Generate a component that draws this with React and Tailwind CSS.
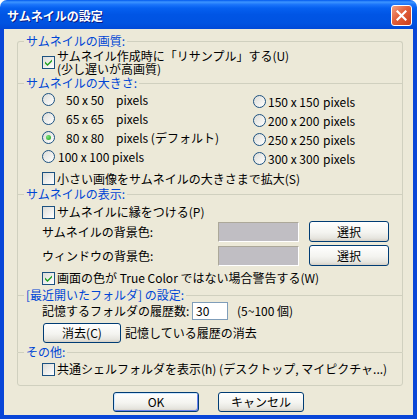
import React from "react";

function Check({ checked }) {
  return (
    <span className="flex h-[13px] w-[13px] shrink-0 items-center justify-center border border-[#1C5180] bg-[linear-gradient(135deg,#DCDCD7,#FFFFFF)]">
      {checked && (
        <svg width="7" height="7" viewBox="0 0 7 7">
          <path d="M0 2.5L2.5 5L7 0.5V2.5L2.5 7L0 4.5Z" fill="#21A121" />
        </svg>
      )}
    </span>
  );
}

function Radio({ checked }) {
  return (
    <span className="flex h-[13px] w-[13px] shrink-0 items-center justify-center rounded-full border border-[#1C5180] bg-[linear-gradient(135deg,#DCDCD7,#FFFFFF)]">
      {checked && (
        <span className="h-[5px] w-[5px] rounded-full bg-[radial-gradient(circle_at_35%_35%,#7BE37B,#1E9E1E)]" />
      )}
    </span>
  );
}

function Btn({ children, className }) {
  return (
    <button
      className={`flex shrink-0 items-center justify-center rounded-[3px] border border-[#003C74] bg-[linear-gradient(to_bottom,#FFFFFF_0%,#F4F4F0_55%,#E6E5DF_85%,#D6D0C5_100%)] text-[12px] leading-[14px] text-black ${className}`}
    >
      {children}
    </button>
  );
}

function Legend({ children }) {
  return (
    <legend className="ml-[6px] px-[2px] text-[12px] leading-[14px] text-[#0046D5]">
      {children}
    </legend>
  );
}

export default function App() {
  return (
    <div className="flex h-[419px] w-[417px] flex-col bg-white font-['Noto_Sans_CJK_JP','Noto_Sans',sans-serif] text-[12px] leading-[14px] text-black">
      {/* Title bar */}
      <div className="flex h-[29px] shrink-0 items-center rounded-t-[7px] bg-[linear-gradient(to_bottom,#0058EE_0%,#3D95FF_7%,#1A74FA_16%,#0560F0_28%,#0055E5_50%,#0053E1_80%,#0049D8_100%)] pl-[7px] pr-[5px] pt-[2px]">
        <span className="text-[12px] font-bold leading-[14px] text-white [text-shadow:1px_1px_#0A1883]">
          サムネイルの設定
        </span>
        <span className="ml-auto flex h-[21px] w-[21px] items-center justify-center rounded-[3px] border border-white bg-[linear-gradient(135deg,#F2A183_0%,#E2603A_45%,#C93D1C_100%)]">
          <svg width="11" height="11" viewBox="0 0 11 11">
            <path d="M1.5 1.5L9.5 9.5M9.5 1.5L1.5 9.5" stroke="#FFFFFF" strokeWidth="2.2" strokeLinecap="square" />
          </svg>
        </span>
      </div>

      {/* Window frame + body */}
      <div className="flex flex-1 bg-[#0846D8] px-[4px] pb-[4px]">
        <div className="flex flex-1 flex-col bg-[#ECE9D8] pl-[13px] pr-[10px] pt-[5px]">
          {/* Group 1 */}
          <fieldset className="h-[49px] min-w-0 rounded-t-[3px] border border-b-0 border-[#D0D0BF] p-0">
            <Legend>サムネイルの画質:</Legend>
            <div className="flex h-[28px] items-center gap-[2px] pl-[24px]">
              <Check checked />
              <div className="leading-[13px]">
                <div>サムネイル作成時に「リサンプル」する(U)</div>
                <div>(少し遅いが高画質)</div>
              </div>
            </div>
          </fieldset>

          {/* Group 2 */}
          <fieldset className="-mt-[7px] h-[118px] min-w-0 border border-b-0 border-[#D0D0BF] p-0">
            <Legend>サムネイルの大きさ:</Legend>
            <div className="pl-[24px]">
              <div className="flex">
                <div className="flex w-[211px] flex-col">
                  <div className="flex h-[19px] items-center">
                    <Radio />
                    <span className="ml-[3px] inline-block w-[58px] pl-[8px]">50 x 50</span>
                    <span>pixels</span>
                  </div>
                  <div className="flex h-[19px] items-center">
                    <Radio />
                    <span className="ml-[3px] inline-block w-[58px] pl-[8px]">65 x 65</span>
                    <span>pixels</span>
                  </div>
                  <div className="flex h-[19px] items-center">
                    <Radio checked />
                    <span className="ml-[3px] inline-block w-[58px] pl-[8px]">80 x 80</span>
                    <span>pixels (デフォルト)</span>
                  </div>
                  <div className="flex h-[19px] items-center">
                    <Radio />
                    <span className="ml-[3px] inline-block w-[54px]">100 x 100</span>
                    <span>pixels</span>
                  </div>
                </div>
                <div className="flex flex-col pt-[2px]">
                  {["150 x 150", "200 x 200", "250 x 250", "300 x 300"].map((t) => (
                    <div key={t} className="flex h-[19px] items-center">
                      <Radio />
                      <span className="ml-[2px] inline-block w-[55px]">{t}</span>
                      <span>pixels</span>
                    </div>
                  ))}
                </div>
              </div>
              <div className="mt-[1px] flex h-[19px] items-center gap-[2px]">
                <Check />
                <span>小さい画像をサムネイルの大きさまで拡大(S)</span>
              </div>
            </div>
          </fieldset>

          {/* Group 3 */}
          <fieldset className="-mt-[7px] h-[108px] min-w-0 border border-b-0 border-[#D0D0BF] p-0">
            <Legend>サムネイルの表示:</Legend>
            <div className="pl-[24px] pt-[2px]">
              <div className="flex h-[18px] items-center gap-[2px]">
                <Check />
                <span>サムネイルに縁をつける(P)</span>
              </div>
              <div className="flex h-[21px] items-center">
                <span className="w-[176px]">サムネイルの背景色:</span>
                <span className="h-[20px] w-[81px] border border-b-white border-l-[#ACA899] border-r-white border-t-[#ACA899] bg-[#C0BEC3]" />
                <Btn className="ml-[10px] h-[21px] w-[80px]">選択</Btn>
              </div>
              <div className="mt-[3px] flex h-[21px] items-center">
                <span className="w-[176px]">ウィンドウの背景色:</span>
                <span className="h-[20px] w-[81px] border border-b-white border-l-[#ACA899] border-r-white border-t-[#ACA899] bg-[#C0BEC3]" />
                <Btn className="ml-[10px] h-[21px] w-[80px]">選択</Btn>
              </div>
              <div className="mt-[2px] flex h-[20px] items-center gap-[2px]">
                <Check checked />
                <span>画面の色が True Color ではない場合警告する(W)</span>
              </div>
            </div>
          </fieldset>

          {/* Group 4 */}
          <fieldset className="-mt-[7px] h-[64px] min-w-0 border border-b-0 border-[#D0D0BF] p-0">
            <Legend>[最近開いたフォルダ] の設定:</Legend>
            <div className="pl-[24px]">
              <div className="flex h-[18px] items-center">
                <span className="w-[150px]">記憶するフォルダの履歴数:</span>
                <span className="flex h-[18px] w-[36px] items-center border border-[#7F9DB9] bg-white pl-[3px]">30</span>
                <span className="ml-[9px]">(5~100 個)</span>
              </div>
              <div className="mt-[3px] flex h-[20px] items-center">
                <Btn className="ml-[1px] h-[20px] w-[78px]">消去(C)</Btn>
                <span className="ml-[4px]">記憶している履歴の消去</span>
              </div>
            </div>
          </fieldset>

          {/* Group 5 */}
          <fieldset className="-mt-[7px] h-[41px] min-w-0 rounded-b-[3px] border border-[#D0D0BF] p-0">
            <Legend>その他:</Legend>
            <div className="flex h-[20px] items-center gap-[2px] pl-[24px]">
              <Check />
              <span>共通シェルフォルダを表示(h) (デスクトップ, マイピクチャ...)</span>
            </div>
          </fieldset>

          {/* Buttons */}
          <div className="mt-[6px] flex justify-center gap-[19px] pr-[3px]">
            <Btn className="h-[20px] w-[86px] shadow-[inset_1px_1px_0_#CEE7FF,inset_-1px_-1px_0_#6982EE]">OK</Btn>
            <Btn className="h-[20px] w-[86px]">キャンセル</Btn>
          </div>
        </div>
      </div>
    </div>
  );
}
